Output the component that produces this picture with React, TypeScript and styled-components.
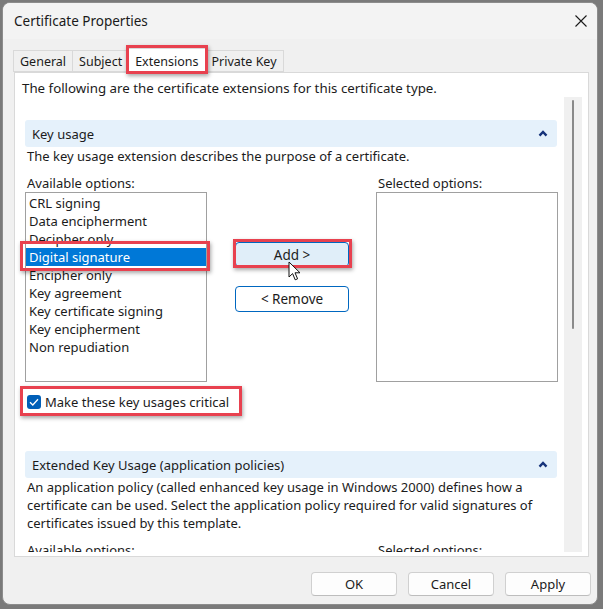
import { createGlobalStyle, styled } from "styled-components";

const GlobalStyle = createGlobalStyle`
  html, body {
    margin: 0;
    padding: 0;
  }
  body {
    width: 603px;
    height: 609px;
    overflow: hidden;
    background: #7a7a7a;
    font-family: "Noto Sans", "Open Sans", sans-serif;
    font-size: 13px;
    color: #1b1b1b;
  }
`;

const Window = styled.div`
  box-sizing: border-box;
  margin: 2px 0 0 2px;
  width: 596px;
  height: 603px;
  background: #f0f0f0;
  border: 1px solid #8c8c8c;
  border-radius: 8px;
  display: flex;
  flex-direction: column;
  overflow: hidden;
`;

const TitleBar = styled.div`
  height: 36px;
  flex: none;
  display: flex;
  align-items: center;
  justify-content: space-between;
  padding: 0 10px 0 11px;
  background: #f3f3f3;
`;

const Title = styled.span`
  font-size: 13.5px;
  color: #1a1a1a;
`;

const CloseButton = styled.div`
  width: 12px;
  height: 12px;
  display: flex;
`;

const TabStrip = styled.div`
  height: 33px;
  flex: none;
  display: flex;
  align-items: flex-end;
  padding-left: 11px;
`;

const Tab = styled.div<{ $active?: boolean }>`
  position: relative;
  box-sizing: border-box;
  height: ${(p) => (p.$active ? "25px" : "22px")};
  padding: 0 6px;
  display: flex;
  align-items: center;
  background: ${(p) => (p.$active ? "#ffffff" : "#f0f0f0")};
  border: 1px solid #d9d9d9;
  border-bottom: ${(p) => (p.$active ? "none" : "1px solid #d9d9d9")};
  margin-left: -1px;
  margin-bottom: ${(p) => (p.$active ? "-1px" : "0")};
  z-index: ${(p) => (p.$active ? 2 : 1)};
  font-size: 12.5px;
`;

const Highlight = styled.span<{ $inset: string }>`
  position: absolute;
  inset: ${(p) => p.$inset};
  border: 3px solid #e8414f;
  box-shadow: 1px 2px 4px rgba(0, 0, 0, 0.35);
  pointer-events: none;
  z-index: 5;
`;

const Panel = styled.div`
  flex: 1;
  min-height: 0;
  margin: 0 8px 0 11px;
  background: #ffffff;
  border: 1px solid #d9d9d9;
  display: flex;
  flex-direction: column;
  padding-bottom: 4px;
`;

const Intro = styled.div`
  padding: 6px 0 0 7px;
  line-height: 18px;
  font-size: 13.3px;
`;

const ScrollArea = styled.div`
  flex: 1;
  min-height: 0;
  display: flex;
  padding-right: 6px;
`;

const ScrollContent = styled.div`
  flex: 1;
  min-width: 0;
  overflow: hidden;
  padding: 0 7px 0 10px;
`;

const ScrollTrack = styled.div`
  width: 18px;
  flex: none;
  background: #f0f0f0;
  display: flex;
  justify-content: center;
  padding-top: 3px;
`;

const ScrollThumb = styled.div`
  width: 2px;
  height: 229px;
  border-radius: 1px;
  background: #8a8a8a;
`;

const SectionHeader = styled.div<{ $gap: number }>`
  margin-top: ${(p) => p.$gap}px;
  height: 27px;
  display: flex;
  align-items: center;
  justify-content: space-between;
  padding: 0 9px 0 7px;
  background: #e5f1fb;
  border-radius: 3px;
`;

const Text = styled.div<{ $gap?: number }>`
  margin-top: ${(p) => p.$gap ?? 0}px;
  padding-left: 2px;
  line-height: 18px;
  white-space: nowrap;
`;

const Columns = styled.div`
  display: flex;
  align-items: flex-start;
`;

const ListColumn = styled.div`
  width: 182px;
  flex: none;
  display: flex;
  flex-direction: column;
`;

const ListLabel = styled.div`
  line-height: 18px;
  margin-top: 9px;
  padding-left: 2px;
`;

const ListBox = styled.div`
  box-sizing: border-box;
  height: 190px;
  border: 1px solid #a0a0a0;
  padding-top: 1px;
  background: #ffffff;
`;

const ListItem = styled.div<{ $selected?: boolean }>`
  position: relative;
  line-height: 18px;
  padding-left: 3px;
  background: ${(p) => (p.$selected ? "#0078d7" : "transparent")};
  color: ${(p) => (p.$selected ? "#ffffff" : "#1b1b1b")};
`;

const ButtonColumn = styled.div`
  width: 114px;
  flex: none;
  margin: 0 27px 0 28px;
  padding-top: 77px;
  display: flex;
  flex-direction: column;
  gap: 19px;
`;

const ActionButton = styled.div<{ $primary?: boolean }>`
  position: relative;
  box-sizing: border-box;
  height: ${(p) => (p.$primary ? "25px" : "26px")};
  display: flex;
  align-items: center;
  justify-content: center;
  border: 1px solid #0067c0;
  border-radius: 4px;
  background: ${(p) => (p.$primary ? "#e0eef9" : "#ffffff")};
  font-size: 13.5px;
`;

const Cursor = styled.svg`
  position: absolute;
  left: 52px;
  top: 18px;
  z-index: 6;
`;

const CheckRow = styled.div`
  position: relative;
  margin-top: 11px;
  display: inline-flex;
  align-items: center;
  gap: 4px;
  padding: 0 8px 0 2px;
  line-height: 18px;
  font-size: 13px;
`;

const CheckBox = styled.div`
  width: 14px;
  height: 14px;
  border-radius: 3px;
  background: #005fb8;
  display: flex;
  align-items: center;
  justify-content: center;
`;

const Footer = styled.div`
  flex: none;
  display: flex;
  justify-content: flex-end;
  gap: 11px;
  padding: 15px 6px 8px 0;
`;

const DialogButton = styled.div`
  box-sizing: border-box;
  width: 86px;
  height: 24px;
  display: flex;
  align-items: center;
  justify-content: center;
  background: #fdfdfd;
  border: 1px solid #d0d0d0;
  border-bottom-color: #bdbdbd;
  border-radius: 4px;
  font-size: 13px;
`;

const Chevron = () => (
  <svg width="10" height="7" viewBox="0 0 10 7">
    <path d="M1.5 5.6 L5 2 L8.5 5.6" fill="none" stroke="#16337a" strokeWidth="2.4" />
  </svg>
);

const keyUsages = [
  "CRL signing",
  "Data encipherment",
  "Decipher only",
  "Digital signature",
  "Encipher only",
  "Key agreement",
  "Key certificate signing",
  "Key encipherment",
  "Non repudiation",
];

export default function App() {
  return (
    <>
      <GlobalStyle />
      <Window>
        <TitleBar>
          <Title>Certificate Properties</Title>
          <CloseButton>
            <svg width="12" height="12" viewBox="0 0 12 12">
              <path d="M0.5 0.5 L11.5 11.5 M11.5 0.5 L0.5 11.5" stroke="#1a1a1a" strokeWidth="1.1" />
            </svg>
          </CloseButton>
        </TitleBar>

        <TabStrip>
          <Tab>General</Tab>
          <Tab>Subject</Tab>
          <Tab $active>
            Extensions
            <Highlight $inset="-4px -3px -1px -3px" />
          </Tab>
          <Tab>Private Key</Tab>
        </TabStrip>

        <Panel>
          <Intro>The following are the certificate extensions for this certificate type.</Intro>
          <ScrollArea>
            <ScrollContent>
              <SectionHeader $gap={23}>
                <span>Key usage</span>
                <Chevron />
              </SectionHeader>
              <Text>The key usage extension describes the purpose of a certificate.</Text>

              <Columns>
                <ListColumn>
                  <ListLabel>Available options:</ListLabel>
                  <ListBox>
                    {keyUsages.map((name) => (
                      <ListItem key={name} $selected={name === "Digital signature"}>
                        {name}
                        {name === "Digital signature" && <Highlight $inset="-7px -4px -5px -6px" />}
                      </ListItem>
                    ))}
                  </ListBox>
                </ListColumn>

                <ButtonColumn>
                  <ActionButton $primary>
                    Add &gt;
                    <Highlight $inset="-4px -4px -2px -3px" />
                    <Cursor width="13" height="21" viewBox="0 0 13 21">
                      <path
                        d="M1 1 L1 16 L4.6 12.6 L7.2 18.8 L9.6 17.8 L7 11.8 L12 11.8 Z"
                        fill="#ffffff"
                        stroke="#111111"
                        strokeWidth="1"
                        strokeLinejoin="round"
                      />
                    </Cursor>
                  </ActionButton>
                  <ActionButton>&lt; Remove</ActionButton>
                </ButtonColumn>

                <ListColumn>
                  <ListLabel>Selected options:</ListLabel>
                  <ListBox />
                </ListColumn>
              </Columns>

              <CheckRow>
                <CheckBox>
                  <svg width="10" height="8" viewBox="0 0 10 8">
                    <path d="M1 4.2 L3.8 7 L9 1.2" fill="none" stroke="#ffffff" strokeWidth="1.3" />
                  </svg>
                </CheckBox>
                Make these key usages critical
                <Highlight $inset="-7px -5px -5px -5px" />
              </CheckRow>

              <SectionHeader $gap={40}>
                <span>Extended Key Usage (application policies)</span>
                <Chevron />
              </SectionHeader>
              <Text>
                An application policy (called enhanced key usage in Windows 2000) defines how a
                <br />
                certificate can be used. Select the application policy required for valid signatures of
                <br />
                certificates issued by this template.
              </Text>
              <Columns>
                <ListColumn>
                  <ListLabel>Available options:</ListLabel>
                </ListColumn>
                <ButtonColumn />
                <ListColumn>
                  <ListLabel>Selected options:</ListLabel>
                </ListColumn>
              </Columns>
            </ScrollContent>
            <ScrollTrack>
              <ScrollThumb />
            </ScrollTrack>
          </ScrollArea>
        </Panel>

        <Footer>
          <DialogButton>OK</DialogButton>
          <DialogButton>Cancel</DialogButton>
          <DialogButton>Apply</DialogButton>
        </Footer>
      </Window>
    </>
  );
}
